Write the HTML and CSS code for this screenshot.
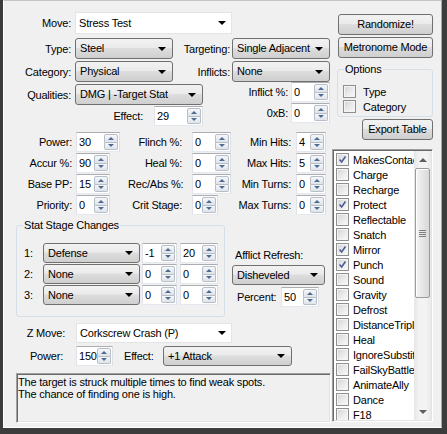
FILE: index.html
```html
<!DOCTYPE html>
<html>
<head>
<meta charset="utf-8">
<link rel="stylesheet" href="styles.css">
</head>
<body>
<div class="frame">
<div class="client">
  <div class="left">
    <div class="row h22 rmove">
      <span class="lbl lw67">Move:</span>
      <div class="cbw w157 ml4">Stress Test</div>
    </div>

    <div class="top2">
      <div class="subL">
        <div class="row h21"><span class="lbl lw67">Type:</span><div class="cb w98 ml4">Steel</div></div>
        <div class="row h21 mt2"><span class="lbl lw67">Category:</span><div class="cb w98 ml4">Physical</div></div>
        <div class="row h21 mt2"><span class="lbl lw67">Qualities:</span><div class="cb w128 ml4">DMG | -Target Stat</div></div>
        <div class="row h20 mt1"><span class="lbl lw139">Effect:</span><div class="num w49 ml11"><span class="v">29</span><span class="spin"><i class="up"></i><i class="dn"></i></span></div></div>
      </div>
      <div class="subR">
        <div class="row h21"><span class="lbl lw57">Targeting:</span><div class="cb w98 ml2">Single Adjacent</div></div>
        <div class="row h21 mt2"><span class="lbl lw57">Inflicts:</span><div class="cb w98 ml2">None</div></div>
        <div class="row h20"><span class="lbl lw115">Inflict %:</span><div class="num w39 ml3"><span class="v">0</span><span class="spin"><i class="up"></i><i class="dn"></i></span></div></div>
        <div class="row h20 mt1"><span class="lbl lw115">0xB:</span><div class="num w39 ml3"><span class="v">0</span><span class="spin"><i class="up"></i><i class="dn"></i></span></div></div>
      </div>
    </div>

    <div class="stats">
      <div class="srow">
        <span class="lbl s1">Power:</span><span class="sc1"><span class="num w44"><span class="v">30</span><span class="spin"><i class="up"></i><i class="dn"></i></span></span></span>
        <span class="lbl s2">Flinch %:</span><span class="sc2"><span class="num w39"><span class="v">0</span><span class="spin"><i class="up"></i><i class="dn"></i></span></span></span>
        <span class="lbl s3">Min Hits:</span><span class="sc3"><span class="num w30"><span class="v">4</span><span class="spin"><i class="up"></i><i class="dn"></i></span></span></span>
      </div>
      <div class="srow">
        <span class="lbl s1">Accur %:</span><span class="sc1"><span class="num w34"><span class="v">90</span><span class="spin"><i class="up"></i><i class="dn"></i></span></span></span>
        <span class="lbl s2">Heal %:</span><span class="sc2"><span class="num w39"><span class="v">0</span><span class="spin"><i class="up"></i><i class="dn"></i></span></span></span>
        <span class="lbl s3">Max Hits:</span><span class="sc3"><span class="num w30"><span class="v">5</span><span class="spin"><i class="up"></i><i class="dn"></i></span></span></span>
      </div>
      <div class="srow">
        <span class="lbl s1">Base PP:</span><span class="sc1"><span class="num w34"><span class="v">15</span><span class="spin"><i class="up"></i><i class="dn"></i></span></span></span>
        <span class="lbl s2">Rec/Abs %:</span><span class="sc2"><span class="num w39"><span class="v">0</span><span class="spin"><i class="up"></i><i class="dn"></i></span></span></span>
        <span class="lbl s3">Min Turns:</span><span class="sc3"><span class="num w30"><span class="v">0</span><span class="spin"><i class="up"></i><i class="dn"></i></span></span></span>
      </div>
      <div class="srow">
        <span class="lbl s1">Priority:</span><span class="sc1"><span class="num w34"><span class="v">0</span><span class="spin"><i class="up"></i><i class="dn"></i></span></span></span>
        <span class="lbl s2">Crit Stage:</span><span class="sc2"><span class="num w26"><span class="v">0</span><span class="spin"><i class="up"></i><i class="dn"></i></span></span></span>
        <span class="lbl s3">Max Turns:</span><span class="sc3"><span class="num w30"><span class="v">0</span><span class="spin"><i class="up"></i><i class="dn"></i></span></span></span>
      </div>
    </div>

    <div class="mid">
      <fieldset class="grp ssc">
        <legend>Stat Stage Changes</legend>
        <div class="row h20"><span class="idx">1:</span><div class="cb w97">Defense</div><div class="num w35 ml2"><span class="v">-1</span><span class="spin"><i class="up"></i><i class="dn"></i></span></div><div class="num w38 ml3"><span class="v">20</span><span class="spin"><i class="up"></i><i class="dn"></i></span></div></div>
        <div class="row h20 mt1"><span class="idx">2:</span><div class="cb w97">None</div><div class="num w35 ml2"><span class="v">0</span><span class="spin"><i class="up"></i><i class="dn"></i></span></div><div class="num w38 ml3"><span class="v">0</span><span class="spin"><i class="up"></i><i class="dn"></i></span></div></div>
        <div class="row h20 mt1"><span class="idx">3:</span><div class="cb w97">None</div><div class="num w35 ml2"><span class="v">0</span><span class="spin"><i class="up"></i><i class="dn"></i></span></div><div class="num w38 ml3"><span class="v">0</span><span class="spin"><i class="up"></i><i class="dn"></i></span></div></div>
      </fieldset>
      <div class="afflict">
        <div class="alabel">Afflict Refresh:</div>
        <div class="cb w93 h20">Disheveled</div>
        <div class="row h20 prow"><span class="plbl">Percent:</span><div class="num w38"><span class="v">50</span><span class="spin"><i class="up"></i><i class="dn"></i></span></div></div>
      </div>
    </div>

    <div class="row h20 zrow">
      <span class="lbl lw61">Z Move:</span>
      <div class="cbw w156 ml11">Corkscrew Crash (P)</div>
    </div>
    <div class="row h20 prow2">
      <span class="lbl lw59">Power:</span>
      <div class="num w37 ml13"><span class="v">150</span><span class="spin"><i class="up"></i><i class="dn"></i></span></div>
      <span class="lbl elbl">Effect:</span>
      <div class="cb w129">+1 Attack</div>
    </div>

    <div class="desc">The target is struck multiple times to find weak spots.<br>The chance of finding one is high.</div>
  </div>

  <div class="right">
    <div class="btn b1">Randomize!</div>
    <div class="btn b2">Metronome Mode</div>
    <fieldset class="grp opts">
      <legend>Options</legend>
      <div class="chk"><span class="box"></span>Type</div>
      <div class="chk"><span class="box"></span>Category</div>
    </fieldset>
    <div class="btn b3">Export Table</div>
    <div class="lb">
      <div class="items">
        <div class="it"><span class="box"><svg viewBox="0 0 13 13"><path d="M3 6.5 L5.5 9.5 L10 3"/></svg></span>MakesContact</div>
        <div class="it"><span class="box"></span>Charge</div>
        <div class="it"><span class="box"></span>Recharge</div>
        <div class="it"><span class="box"><svg viewBox="0 0 13 13"><path d="M3 6.5 L5.5 9.5 L10 3"/></svg></span>Protect</div>
        <div class="it"><span class="box"></span>Reflectable</div>
        <div class="it"><span class="box"></span>Snatch</div>
        <div class="it"><span class="box"><svg viewBox="0 0 13 13"><path d="M3 6.5 L5.5 9.5 L10 3"/></svg></span>Mirror</div>
        <div class="it"><span class="box"><svg viewBox="0 0 13 13"><path d="M3 6.5 L5.5 9.5 L10 3"/></svg></span>Punch</div>
        <div class="it"><span class="box"></span>Sound</div>
        <div class="it"><span class="box"></span>Gravity</div>
        <div class="it"><span class="box"></span>Defrost</div>
        <div class="it"><span class="box"></span>DistanceTriple</div>
        <div class="it"><span class="box"></span>Heal</div>
        <div class="it"><span class="box"></span>IgnoreSubstitute</div>
        <div class="it"><span class="box"></span>FailSkyBattle</div>
        <div class="it"><span class="box"></span>AnimateAlly</div>
        <div class="it"><span class="box"></span>Dance</div>
        <div class="it"><span class="box"></span>F18</div>
      </div>
      <div class="sb">
        <span class="sbu"></span>
        <span class="thumb"><i></i></span>
        <span class="track"></span>
        <span class="sbd"></span>
      </div>
    </div>
  </div>
</div>
</div>
</body>
</html>
```
FILE: styles.css
```css
* { box-sizing: border-box; }
html, body { margin: 0; padding: 0; }
body {
  font-family: "Liberation Sans", Arial, sans-serif;
  font-size: 11px;
  letter-spacing: -0.2px;
  color: #000;
  background: #3c3c3c;
}
.frame {
  width: 447px;
  height: 434px;
  padding: 0 5px 6px 3px;
  background: #3c3c3c;
}
.client {
  height: 100%;
  display: flex;
  background: #f0f0f0;
  border-left: 1px solid #fff;
  border-bottom: 1px solid #fff;
  border-top: 1px solid #c4c4c4;
  border-right: 1px solid #a8a8a8;
}
.left { width: 328px; flex: none; }
.right { width: 101px; flex: none; display: flex; flex-direction: column; align-items: flex-start; }

.row { display: flex; align-items: center; }
.h20 { height: 20px; }
.h21 { height: 21px; }
.h22 { height: 22px; }
.mt1 { margin-top: 1px; }
.mt2 { margin-top: 2px; }
.ml2 { margin-left: 2px; }
.ml3 { margin-left: 3px; }
.ml4 { margin-left: 4px; }
.ml11 { margin-left: 11px; }
.ml13 { margin-left: 13px; }

.lbl { flex: none; text-align: right; white-space: nowrap; }
.lw57 { width: 57px; }
.lw59 { width: 59px; }
.lw61 { width: 61px; }
.lw67 { width: 67px; }
.lw115 { width: 115px; }
.lw139 { width: 139px; }

/* combo boxes */
.cb, .cbw {
  position: relative;
  flex: none;
  height: 21px;
  line-height: 19px;
  padding-left: 4px;
  white-space: nowrap;
  overflow: hidden;
}
.cb {
  border: 1px solid #707070;
  border-radius: 3px;
  background: linear-gradient(#f2f2f2 0%, #ebebeb 45%, #dddddd 50%, #cfcfcf 100%);
}
.cb.h20, .row.h20 > .cb { height: 20px; line-height: 18px; }
.cbw {
  border: 1px solid #e4e4e4;
  background: #fff;
  padding-left: 3px;
}
.row.h22 > .cbw { height: 22px; line-height: 20px; }
.row.h20 > .cbw { height: 20px; line-height: 18px; }
.cb::after, .cbw::after {
  content: "";
  position: absolute;
  right: 6px;
  top: 50%;
  margin-top: -2px;
  border-left: 4px solid transparent;
  border-right: 4px solid transparent;
  border-top: 4px solid #000;
}
.cbw::after { right: 5px; }
.w93 { width: 93px; }
.w97 { width: 97px; }
.w98 { width: 98px; }
.w128 { width: 128px; }
.w129 { width: 129px; }
.w156 { width: 156px; }
.w157 { width: 157px; }

/* numeric up-down */
.num {
  display: flex;
  flex: none;
  height: 20px;
  border: 1px solid #abadb3;
  border-color: #abadb3 #dbdfe6 #e3e9ef #e2e3ea;
  background: #fff;
}
.num .v { flex: 1; padding-left: 2px; line-height: 18px; white-space: nowrap; overflow: hidden; }
.spin {
  width: 15px;
  flex: none;
  display: flex;
  flex-direction: column;
  padding: 1px 1px 1px 0;
  gap: 0;
}
.spin i {
  flex: 1;
  display: flex;
  align-items: center;
  justify-content: center;
  border: 1px solid #b7bec7;
  background: linear-gradient(#f5f7f9, #dfe4ea);
}
.spin i.up { border-radius: 2px 2px 0 0; }
.spin i.dn { border-radius: 0 0 2px 2px; border-top: none; }
.spin i.up::before {
  content: "";
  border-left: 3px solid transparent;
  border-right: 3px solid transparent;
  border-bottom: 3px solid #4f6a91;
}
.spin i.dn::before {
  content: "";
  border-left: 3px solid transparent;
  border-right: 3px solid transparent;
  border-top: 3px solid #4f6a91;
}
.w26 { width: 26px; }
.w30 { width: 30px; }
.w34 { width: 34px; }
.w35 { width: 35px; }
.w37 { width: 37px; }
.w38 { width: 38px; }
.w39 { width: 39px; }
.w44 { width: 44px; }
.w49 { width: 49px; }

/* top block */
.rmove { margin-top: 11px; }
.top2 { display: flex; margin-top: 4px; }
.subL { width: 169px; flex: none; }
.subR { width: 157px; flex: none; }

/* stats */
.stats { margin-top: 6px; display: flex; flex-direction: column; gap: 1px; }
.srow { display: flex; align-items: center; height: 20px; }
.s1 { width: 68px; }
.sc1 { width: 56px; padding-left: 4px; flex: none; }
.s2 { width: 54px; }
.sc2 { width: 53px; padding-left: 10px; flex: none; }
.s3 { width: 56px; }
.sc3 { padding-left: 5px; flex: none; }

/* group boxes */
.grp {
  margin: 0;
  border: 1px solid #d5dfe5;
  border-radius: 3px;
  min-width: 0;
}
.grp legend {
  padding: 0 1px;
  margin-left: -1px;
  line-height: 13px;
}
.mid { display: flex; margin-top: 4px; }
.ssc {
  margin-left: 12px;
  width: 209px;
  padding: 11px 0 11px 7px;
}
.idx { width: 19px; flex: none; }
.afflict { margin-left: 7px; width: 93px; padding-top: 30px; }
.alabel { line-height: 13px; padding-left: 3px; }
.afflict .cb { margin-top: 3px; }
.prow { margin-top: 2px; }
.plbl { width: 49px; padding-left: 5px; flex: none; }

.zrow { margin-top: 6px; }
.prow2 { margin-top: 3px; }
.elbl { margin-left: 11px; width: 31px; text-align: left; }
.prow2 .cb { margin-left: 8px; }

.desc {
  margin: 7px 0 0 12px;
  width: 315px;
  height: 50px;
  padding: 2px 1px;
  line-height: 12px;
  border: 1px solid;
  border-color: #a0a0a0 #fff #fff #a0a0a0;
  box-shadow: inset 1px 1px 0 #696969, inset -1px -1px 0 #e3e3e3;
  background: #f0f0f0;
}

/* right column */
.btn {
  height: 21px;
  line-height: 19px;
  text-align: center;
  border: 1px solid #707070;
  border-radius: 3px;
  background: linear-gradient(#f2f2f2 0%, #ebebeb 45%, #dddddd 50%, #cfcfcf 100%);
  white-space: nowrap;
}
.b1 { margin: 13px 0 0 6px; width: 95px; }
.b2 { margin: 2px 0 0 6px; width: 95px; }
.b3 { margin: 2px 0 0 30px; width: 71px; }
.opts {
  margin-top: 5px;
  margin-left: 5px;
  width: 96px;
  padding: 8px 0 2px 7px;
}
.chk { display: flex; align-items: center; height: 15px; margin-left: -2px; }
.chk .box { margin-right: 7px; }

.box {
  width: 13px;
  height: 13px;
  flex: none;
  border: 1px solid #8e8f8f;
  background: linear-gradient(135deg, #d3d3d3 0%, #e9e9e9 50%, #fafafa 100%);
  box-shadow: inset 0 0 0 1px #f4f4f4;
  display: block;
}
.box svg { display: block; width: 11px; height: 11px; margin: 0; }
.box svg path { fill: none; stroke: #4a5d94; stroke-width: 1.9; }

.lb {
  margin-top: 9px;
  width: 101px;
  height: 273px;
  display: flex;
  background: #fff;
  border: 1px solid;
  border-color: #a0a0a0 #fff #fff #a0a0a0;
  box-shadow: inset 1px 1px 0 #696969, inset -1px -1px 0 #e3e3e3;
  padding: 1px;
}
.items { flex: 1; overflow: hidden; padding-top: 1px; }
.it { height: 15px; display: flex; align-items: center; padding-left: 2px; white-space: nowrap; }
.it .box { margin-right: 4px; }
.sb {
  width: 17px;
  flex: none;
  display: flex;
  flex-direction: column;
  background: linear-gradient(to right, #e6e6e6, #f3f3f3 30%, #f3f3f3 70%, #e9e9e9);
}
.sbu, .sbd {
  height: 17px;
  flex: none;
  display: flex;
  align-items: center;
  justify-content: center;
}
.sbu::before {
  content: "";
  border-left: 4px solid transparent;
  border-right: 4px solid transparent;
  border-bottom: 4px solid #5f5f5f;
}
.sbd::before {
  content: "";
  border-left: 4px solid transparent;
  border-right: 4px solid transparent;
  border-top: 4px solid #5f5f5f;
}
.thumb {
  height: 130px;
  flex: none;
  margin: 0 1px;
  border: 1px solid #9b9b9b;
  border-radius: 2px;
  background: linear-gradient(to right, #f4f4f4, #e6e6e6 50%, #d8d8d8);
  box-shadow: inset 1px 1px 0 #fff;
  display: flex;
  align-items: center;
  justify-content: center;
}
.thumb i {
  width: 7px;
  height: 7px;
  background: repeating-linear-gradient(#7d7d7d 0 1px, transparent 1px 2px);
}
.track { flex: 1; }
```
